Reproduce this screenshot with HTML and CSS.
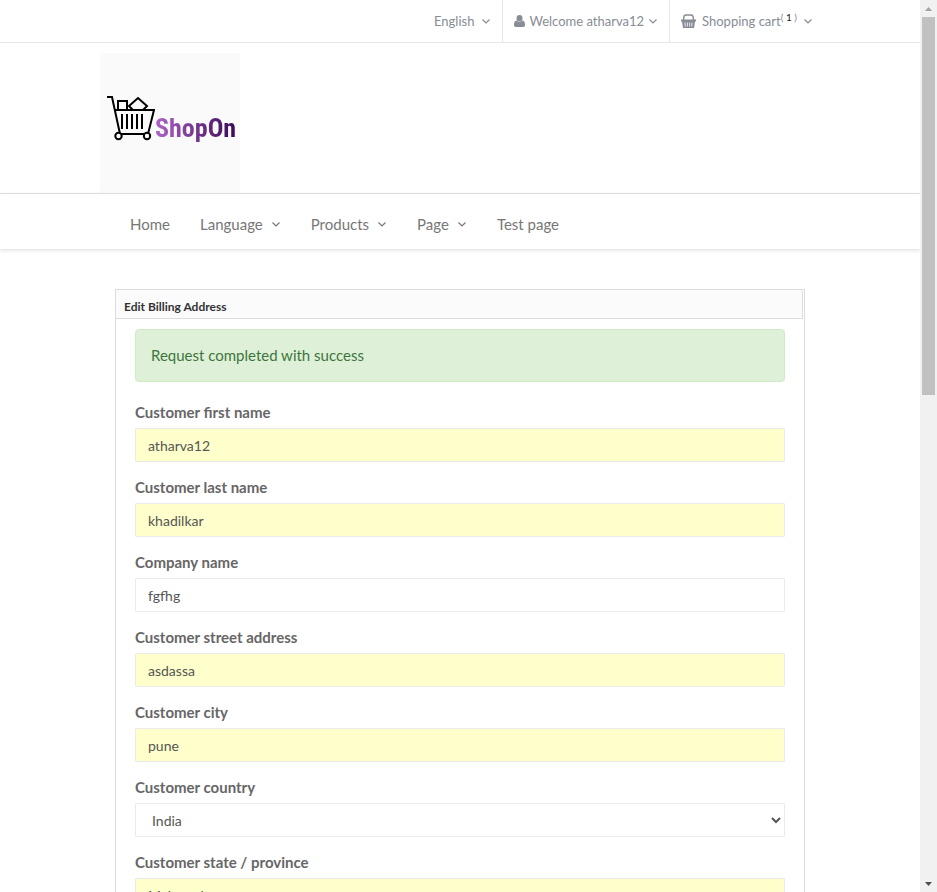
FILE: index.html
```html
<!DOCTYPE html>
<html lang="en">
<head>
<meta charset="utf-8">
<meta name="viewport" content="width=device-width, initial-scale=1">
<title>ShopOn</title>
<link rel="stylesheet" href="styles.css">
</head>
<body>
<svg class="defs" aria-hidden="true">
  <symbol id="chevron" viewBox="0 0 10 8"><path d="M1.500 2.500L5 6l3.500-3.500" fill="none" stroke="currentColor" stroke-width="1.200"/></symbol>
</svg>
<div class="window">
  <div class="page">
    <header>
      <div class="topbar">
        <div class="container topbar-items">
          <a class="top-item" href="#">English <svg class="chevron top-chevron"><use href="#chevron"/></svg></a>
          <a class="top-item" href="#">
            <svg class="user-icon" viewBox="0 0 11 12"><path d="M5.500 0a3 3.200 0 0 1 0 6.400a3 3.200 0 0 1 0-6.400zM2.500 5.500c1.700 1.900 4.300 1.900 6 0C10.500 5.700 11 8 11 10c0 1.300-.7 2-1.800 2H1.800C.7 12 0 11.300 0 10c0-2 .5-4.300 2.500-4.500z" fill="currentColor"/></svg>
            Welcome atharva12 <svg class="chevron"><use href="#chevron"/></svg></a>
          <a class="top-item" href="#">
            <svg class="cart-icon" viewBox="0 0 15 14"><path d="M2.700 6V3.500Q3 1 5 1h5q2 0 2.300 2.500V6" fill="none" stroke="currentColor" stroke-width="1.400"/><path d="M0 5.500h15v2h-1L13 14H2L1 7.500H0z" fill="currentColor"/><path d="M4 8.500l.3 4M6.400 8.500v4M8.600 8.500v4M11 8.500l-.3 4" stroke="#fff" stroke-width=".8"/></svg>
            <span>Shopping cart<sup>( <b>1</b> )</sup></span> <svg class="chevron"><use href="#chevron"/></svg></a>
        </div>
      </div>
      <div class="brand">
        <div class="container">
          <a class="logo" href="#" aria-label="ShopOn">
            <svg class="cart-art" viewBox="0 0 48 46" fill="none" stroke="#000" stroke-width="2"><path d="M0 2h5l8 37h27M7 15h40l-6 24M11 14V6h9v8M22 11l9-8 9 8-4 4H26z"/><path d="M15 19v15M20 19v15M25 19v15M30 19v15M35 19v15"/><circle cx="11.500" cy="41" r="3.200" fill="#fafafa"/><circle cx="40" cy="41" r="3.200" fill="#fafafa"/></svg>
            <span class="wordmark">ShopOn</span>
          </a>
        </div>
      </div>
      <nav class="nav">
        <div class="container nav-items">
          <a href="#">Home</a>
          <a href="#">Language <svg class="chevron"><use href="#chevron"/></svg></a>
          <a href="#">Products <svg class="chevron"><use href="#chevron"/></svg></a>
          <a href="#">Page <svg class="chevron"><use href="#chevron"/></svg></a>
          <a href="#">Test page</a>
        </div>
      </nav>
    </header>
    <main class="container main">
      <section class="card">
        <h1 class="card-title">Edit Billing Address</h1>
        <form class="form">
          <div class="alert" role="status">Request completed with success</div>
          <div class="field"><label for="first">Customer first name</label><input class="filled" id="first" type="text" value="atharva12"></div>
          <div class="field"><label for="last">Customer last name</label><input class="filled" id="last" type="text" value="khadilkar"></div>
          <div class="field"><label for="company">Company name</label><input id="company" type="text" value="fgfhg"></div>
          <div class="field"><label for="street">Customer street address</label><input class="filled" id="street" type="text" value="asdassa"></div>
          <div class="field"><label for="city">Customer city</label><input class="filled" id="city" type="text" value="pune"></div>
          <div class="field"><label for="country">Customer country</label><select id="country"><option>India</option></select></div>
          <div class="field"><label for="state">Customer state / province</label><input class="filled" id="state" type="text" value="Maharashtra"></div>
        </form>
      </section>
    </main>
  </div>
  <div class="scrollbar" aria-hidden="true">
    <svg class="arrow arrow-up" viewBox="0 0 17 17"><path d="M5 11h7L8.500 7z" fill="currentColor"/></svg>
    <div class="track"><div class="thumb"></div></div>
    <svg class="arrow" viewBox="0 0 17 17"><path d="M5 7h7l-3.500 4z" fill="currentColor"/></svg>
  </div>
</div>
</body>
</html>
```
FILE: styles.css
```css
* { box-sizing: border-box; }
body {
  margin: 0;
  background: #fff;
  color: #666;
  font: 15px/24px Lato, sans-serif;
}
a { color: inherit; text-decoration: none; }
.defs { position: absolute; width: 0; height: 0; }
.window { display: flex; height: 100vh; overflow: hidden; }
.page { flex: 1; min-width: 0; overflow: hidden; }
.container { max-width: 720px; margin: 0 auto; }
.chevron { width: 10px; height: 8px; flex: none; }

.topbar { border-bottom: 1px solid #e7e7e7; }
.topbar-items { display: flex; justify-content: flex-end; }
.top-item {
  display: flex;
  align-items: center;
  gap: 4px;
  height: 42px;
  padding: 0 11px;
  color: #888c96;
  font-size: 13px;
}
.top-item + .top-item { border-left: 1px solid #e7e7e7; }
.top-item:last-child { gap: 6px; padding-right: 7px; }
.top-chevron { margin-left: 3px; }
.user-icon { width: 11px; height: 12px; }
.cart-icon { width: 15px; height: 14px; }
sup { font-size: 10px; line-height: 0; }
sup b { color: #222; font-weight: 400; }

.brand { padding-top: 10px; border-bottom: 1px solid #e7e7e7; }
.logo {
  display: flex;
  align-items: flex-start;
  width: 140px;
  height: 140px;
  padding: 42px 6px 0 7px;
  background: #fafafa;
}
.cart-art { width: 48px; height: 46px; flex: none; }
.wordmark {
  margin-top: 16px;
  background: linear-gradient(90deg, #ad63c8, #3c0a58);
  background-clip: text;
  color: transparent;
  font: bold 26px/34px "Liberation Sans Narrow", "Roboto Condensed", sans-serif;
}

.nav { box-shadow: 0 1px 4px rgba(0, 0, 0, .15); }
.nav-items {
  display: flex;
  gap: 30px;
  padding: 18px 30px 13px;
  color: #777;
}
.nav-items a { display: flex; align-items: center; gap: 8px; }

.main { padding: 40px 15px; }
.card { border: 1px solid #dcdcdc; }
.card-title {
  margin: 0 1px 0 0;
  padding: 5px 8px 0;
  border: solid #dcdcdc;
  border-width: 0 1px 1px 0;
  border-radius: 3px 3px 0 0;
  background: #fbfbfb;
  color: #333;
  font-size: 12px;
  line-height: 23px;
}
.form { padding: 10px 19px; }
.alert {
  margin-bottom: 18px;
  padding: 13px 15px 14px;
  border: 1px solid #d0e9c6;
  border-radius: 4px;
  background: #dff0d8;
  color: #3c763d;
}
.field { margin-bottom: 13px; }
label { display: block; margin-bottom: 4px; font-weight: 700; }
input, select {
  display: block;
  width: 100%;
  height: 34px;
  padding: 0 12px;
  border: 1px solid #ebebeb;
  border-radius: 1px;
  background: #fff;
  color: #555;
  font: 14px/20px Lato, sans-serif;
}
.filled { background: #ffffcc; }

.scrollbar {
  display: flex;
  flex-direction: column;
  width: 17px;
  background: #f1f1f1;
}
.arrow { width: 17px; height: 17px; color: #505050; }
.arrow-up { color: #a3a3a3; }
.track { flex: 1; padding: 0 2px; }
.thumb { height: 44%; background: #c1c1c1; }
```
